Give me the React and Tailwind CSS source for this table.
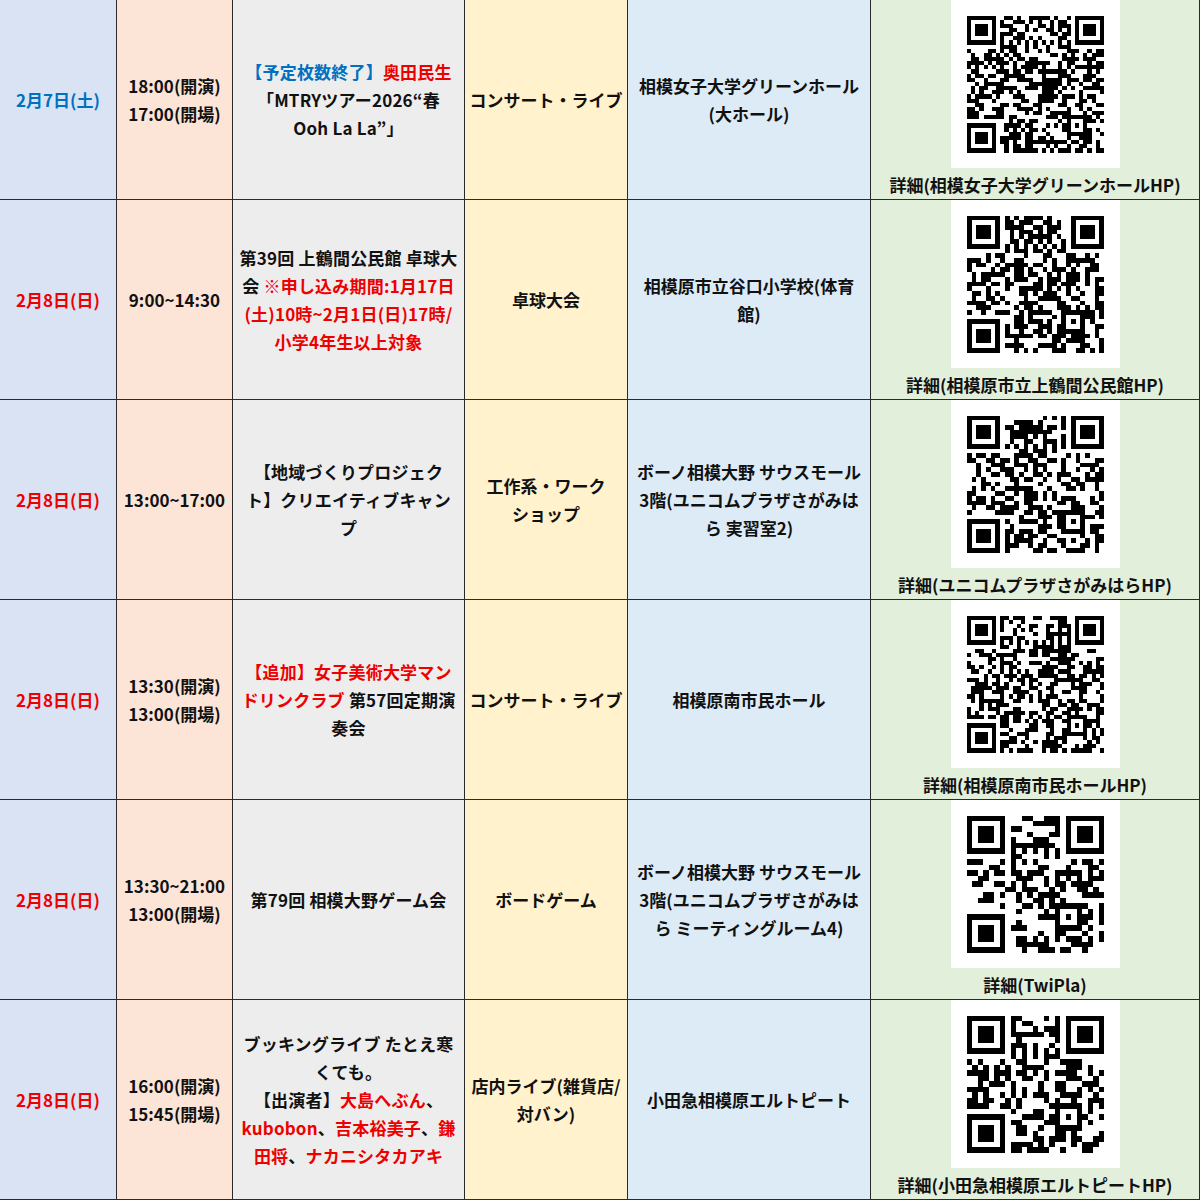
import React from 'react';

const R = ({ children }) => <span className="text-[#ee0000]">{children}</span>;
const B = ({ children }) => <span className="text-[#0070c0]">{children}</span>;

// deterministic pseudo random QR-like pattern
function mulberry32(a) {
    return function () {
        a |= 0;
        a = (a + 0x6d2b79f5) | 0;
        let t = Math.imul(a ^ (a >>> 15), 1 | a);
        t = (t + Math.imul(t ^ (t >>> 7), 61 | t)) ^ t;
        return ((t ^ (t >>> 14)) >>> 0) / 4294967296;
    };
}

function buildQr(n, seed) {
    const rnd = mulberry32(seed);
    const m = Array.from({ length: n }, () => Array.from({ length: n }, () => rnd() < 0.5));
    const finder = (ox, oy) => {
        for (let y = -1; y <= 7; y++) {
            for (let x = -1; x <= 7; x++) {
                const px = ox + x, py = oy + y;
                if (px < 0 || py < 0 || px >= n || py >= n) continue;
                const edge = x === 0 || x === 6 || y === 0 || y === 6;
                const core = x >= 2 && x <= 4 && y >= 2 && y <= 4;
                m[py][px] = x >= 0 && x <= 6 && y >= 0 && y <= 6 && (edge || core);
            }
        }
    };
    finder(0, 0);
    finder(n - 7, 0);
    finder(0, n - 7);
    for (let i = 8; i < n - 8; i++) {
        m[6][i] = i % 2 === 0;
        m[i][6] = i % 2 === 0;
    }
    const c = n - 7;
    for (let y = -2; y <= 2; y++) {
        for (let x = -2; x <= 2; x++) {
            m[c + y][c + x] = Math.max(Math.abs(x), Math.abs(y)) !== 1;
        }
    }
    let d = '';
    m.forEach((row, y) => row.forEach((on, x) => {
        if (on) d += `M${x} ${y}h1v1h-1z`;
    }));
    return d;
}

const QrCode = ({ n, seed }) => {
    const pad = (n * 168) / 137 - n;
    const half = pad / 2;
    return (
        <div className="w-[169px] h-[168px] bg-white shrink-0">
            <svg
                viewBox={`${-half} ${-half} ${n + pad} ${n + pad}`}
                width="169"
                height="168"
                shapeRendering="crispEdges"
            >
                <path d={buildQr(n, seed)} fill="#000" />
            </svg>
        </div>
    );
};

const rows = [
    {
        date: <B>2月7日(土)</B>,
        time: <>18:00(開演)<br />17:00(開場)</>,
        title: <><B>【予定枚数終了】</B><R>奥田民生</R><br />「MTRYツアー2026“春<br />Ooh La La”」</>,
        genre: <>コンサート・ライブ</>,
        place: <>相模女子大学グリーンホール<br />(大ホール)</>,
        link: '詳細(相模女子大学グリーンホールHP)',
        qr: [33, 11],
    },
    {
        date: <R>2月8日(日)</R>,
        time: <>9:00~14:30</>,
        title: <>第39回 上鶴間公民館 卓球大<br />会 <R>※申し込み期間:1月17日</R><br /><R>(土)10時~2月1日(日)17時/</R><br /><R>小学4年生以上対象</R></>,
        genre: <>卓球大会</>,
        place: <>相模原市立谷口小学校(体育<br />館)</>,
        link: '詳細(相模原市立上鶴間公民館HP)',
        qr: [29, 27],
    },
    {
        date: <R>2月8日(日)</R>,
        time: <>13:00~17:00</>,
        title: <>【地域づくりプロジェク<br />ト】クリエイティブキャン<br />プ</>,
        genre: <>工作系・ワーク<br />ショップ</>,
        place: <>ボーノ相模大野 サウスモール<br />3階(ユニコムプラザさがみは<br />ら 実習室2)</>,
        link: '詳細(ユニコムプラザさがみはらHP)',
        qr: [29, 53],
    },
    {
        date: <R>2月8日(日)</R>,
        time: <>13:30(開演)<br />13:00(開場)</>,
        title: <><R>【追加】女子美術大学マン</R><br /><R>ドリンクラブ</R> 第57回定期演<br />奏会</>,
        genre: <>コンサート・ライブ</>,
        place: <>相模原南市民ホール</>,
        link: '詳細(相模原南市民ホールHP)',
        qr: [33, 91],
    },
    {
        date: <R>2月8日(日)</R>,
        time: <>13:30~21:00<br />13:00(開場)</>,
        title: <>第79回 相模大野ゲーム会</>,
        genre: <>ボードゲーム</>,
        place: <>ボーノ相模大野 サウスモール<br />3階(ユニコムプラザさがみは<br />ら ミーティングルーム4)</>,
        link: '詳細(TwiPla)',
        qr: [25, 7],
    },
    {
        date: <R>2月8日(日)</R>,
        time: <>16:00(開演)<br />15:45(開場)</>,
        title: <>ブッキングライブ たとえ寒<br />くても。<br />【出演者】<R>大島へぶん</R>、<br /><R>kubobon</R>、<R>吉本裕美子</R>、<R>鎌</R><br /><R>田将</R>、<R>ナカニシタカアキ</R></>,
        genre: <>店内ライブ(雑貨店/<br />対バン)</>,
        place: <>小田急相模原エルトピート</>,
        link: '詳細(小田急相模原エルトピートHP)',
        qr: [25, 143],
    },
];

const cell = 'flex items-center justify-center text-center whitespace-nowrap border-r border-b border-[#2a2a2a] leading-[28px]';

const App = () => {
    return (
        <div className="w-[1200px] h-[1200px] overflow-hidden bg-white font-['Noto_Sans_CJK_JP','Liberation_Sans',sans-serif] font-bold text-[17px] text-[#111]">
            <div className="grid grid-cols-[117px_116px_232px_163px_243px_329px] grid-rows-[repeat(6,200px)]">
                {rows.map((r, i) => (
                    <React.Fragment key={i}>
                        <div className={`${cell} bg-[#dae3f3]`}>{r.date}</div>
                        <div className={`${cell} bg-[#fce4d6]`}>{r.time}</div>
                        <div className={`${cell} bg-[#ededed] tracking-[0.2px]`}>
                            <div>{r.title}</div>
                        </div>
                        <div className={`${cell} bg-[#fff2cc]`}>
                            <div>{r.genre}</div>
                        </div>
                        <div className={`${cell} bg-[#ddebf7]`}>
                            <div>{r.place}</div>
                        </div>
                        <div className="flex flex-col items-center border-r border-b border-[#2a2a2a] bg-[#e2efda]">
                            <QrCode n={r.qr[0]} seed={r.qr[1]} />
                            <div className="mt-[3px] leading-[28px] whitespace-nowrap">{r.link}</div>
                        </div>
                    </React.Fragment>
                ))}
            </div>
        </div>
    );
};

export default App;
